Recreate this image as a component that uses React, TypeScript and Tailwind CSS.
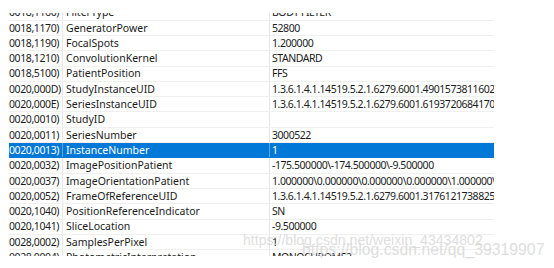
import React from "react";

const rows: [string, string, string][] = [
  ["0018,1160)", "FilterType", "BODY FILTER"],
  ["0018,1170)", "GeneratorPower", "52800"],
  ["0018,1190)", "FocalSpots", "1.200000"],
  ["0018,1210)", "ConvolutionKernel", "STANDARD"],
  ["0018,5100)", "PatientPosition", "FFS"],
  ["0020,000D)", "StudyInstanceUID", "1.3.6.1.4.1.14519.5.2.1.6279.6001.490157381160200424062001813021"],
  ["0020,000E)", "SeriesInstanceUID", "1.3.6.1.4.1.14519.5.2.1.6279.6001.619372068417051974713149104919"],
  ["0020,0010)", "StudyID", ""],
  ["0020,0011)", "SeriesNumber", "3000522"],
  ["0020,0013)", "InstanceNumber", "1"],
  ["0020,0032)", "ImagePositionPatient", "-175.500000\\-174.500000\\-9.500000"],
  ["0020,0037)", "ImageOrientationPatient", "1.000000\\0.000000\\0.000000\\0.000000\\1.000000\\0.000000"],
  ["0020,0052)", "FrameOfReferenceUID", "1.3.6.1.4.1.14519.5.2.1.6279.6001.317612173882524079470219549862"],
  ["0020,1040)", "PositionReferenceIndicator", "SN"],
  ["0020,1041)", "SliceLocation", "-9.500000"],
  ["0028,0002)", "SamplesPerPixel", "1"],
  ["0028,0004)", "PhotometricInterpretation", "MONOCHROME2"],
];

export default function App() {
  return (
    <div
      className="relative w-[554px] h-[268px] bg-white overflow-hidden"
      style={{ fontFamily: '"Noto Sans", "Segoe UI", sans-serif' }}
    >
      <div className="pt-[13px] pl-[9px]">
        <div className="w-[485px] h-[243px] overflow-hidden">
          <div className="-mt-[7.6px]">
            {rows.map(([tag, name, value], i) => {
              const sel = i === 9;
              return (
                <div
                  key={i}
                  className={
                    "flex h-[15.3px] items-center text-[10.5px] leading-none whitespace-nowrap border-b " +
                    (sel
                      ? "bg-[#0078d7] text-white border-[#0078d7]"
                      : "bg-white text-[#1b1b1b] border-[#f0f0f0]")
                  }
                >
                  <div className="w-[53px] shrink-0 h-full flex items-center overflow-hidden tracking-[-0.4px]">
                    {tag}
                  </div>
                  <div
                    className={
                      "w-[207px] shrink-0 h-full flex items-center pl-[3px] border-l overflow-hidden " +
                      (sel ? "border-[#5aa7e6]" : "border-[#e6e6e6]")
                    }
                  >
                    {name}
                  </div>
                  <div
                    className={
                      "flex-1 h-full flex items-center pl-[2px] border-l overflow-hidden tracking-[-0.45px] " +
                      (sel ? "border-[#5aa7e6]" : "border-[#e6e6e6]")
                    }
                  >
                    {value}
                  </div>
                </div>
              );
            })}
          </div>
        </div>
      </div>
      <div
        className="absolute left-[243px] top-[233px] text-[14.1px] leading-none text-[#d4d4d4] opacity-75 whitespace-nowrap pointer-events-none"
        style={{ fontFamily: '"Liberation Sans", Arial, sans-serif' }}
      >
        https://blog.csdn.net/weixin_43434802
      </div>
      <div
        className="absolute left-[302px] top-[241.5px] text-[15.8px] leading-none text-[#d4d4d4] opacity-75 whitespace-nowrap pointer-events-none"
        style={{ fontFamily: '"Liberation Sans", Arial, sans-serif' }}
      >
        https://blog.csdn.net/qq_39319907
      </div>
    </div>
  );
}
